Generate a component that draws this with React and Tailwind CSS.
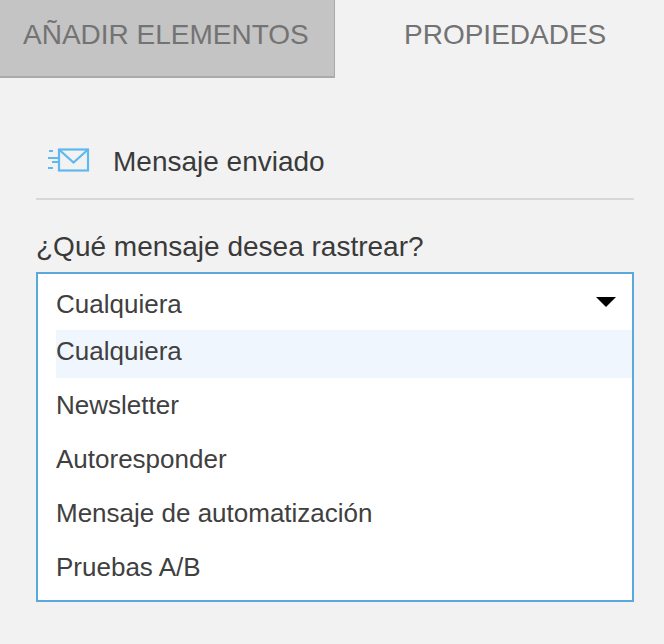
const options = ["Newsletter", "Autoresponder", "Mensaje de automatización", "Pruebas A/B"];

function SentIcon() {
  return (
    <svg width="44" height="26" viewBox="0 0 44 26" fill="none" stroke="#5fb8ee" strokeWidth="2.2">
      <rect x="12" y="2.5" width="29" height="21" />
      <path d="M12.5 3l14 12.5L40.5 3" />
      <path d="M2 4h4M1 11h11M5 15h7M1 21h5" />
    </svg>
  );
}

export default function App() {
  return (
    <div className="w-[664px] h-[644px] bg-[#f2f2f2] overflow-hidden font-['Liberation_Sans',Arial,sans-serif]">
      <div className="flex h-[78px]">
        <div className="w-[335px] bg-[#c4c4c4] border-b-2 border-r border-[#aaaaaa] pl-[23px] pt-[17px] text-[28px] leading-[36px] text-[#737373]">
          AÑADIR ELEMENTOS
        </div>
        <div className="flex-1 pl-[69px] pt-[17px] text-[28px] leading-[36px] text-[#737373]">
          PROPIEDADES
        </div>
      </div>
      <div className="px-[30px] pl-[36px]">
        <div className="h-[122px] border-b-2 border-[#d8d8d8] flex items-end pb-[18px]">
          <div className="ml-[11px] mb-[7px] w-[66px]">
            <SentIcon />
          </div>
          <span className="text-[28px] leading-[36px] text-[#3a3a3a]">Mensaje enviado</span>
        </div>
        <div className="mt-[29px] text-[28px] leading-[36px] text-[#3a3a3a]">¿Qué mensaje desea rastrear?</div>
        <div className="mt-[7px] h-[330px] bg-white border-2 border-[#5aa9dc] text-[26px] text-[#404040]">
          <div className="h-[56px] pl-[18px] pr-[16px] flex items-center justify-between leading-[36px] pt-[4px]">
            <span>Cualquiera</span>
            <div className="w-0 h-0 border-x-[10px] border-x-transparent border-t-[10px] border-t-black mb-[5px]" />
          </div>
          <div className="ml-[18px] h-[48px] bg-[#f0f6fd] leading-[43px]">Cualquiera</div>
          {options.map((o) => (
            <div key={o} className="h-[54px] pl-[18px] leading-[54px]">
              {o}
            </div>
          ))}
        </div>
      </div>
    </div>
  );
}
